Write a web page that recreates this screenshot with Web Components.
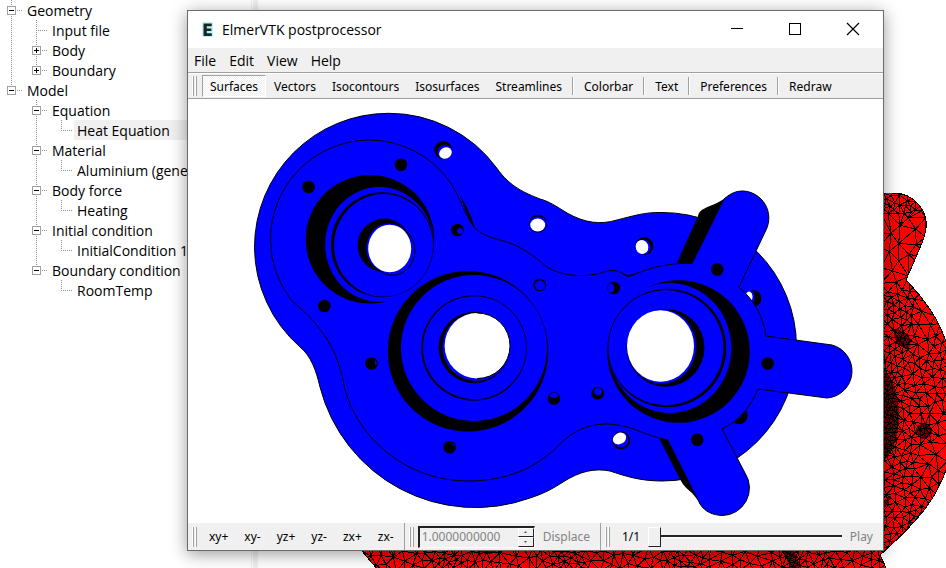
<!DOCTYPE html>
<html lang="en">
<head>
<meta charset="utf-8">
<title>ElmerVTK postprocessor</title>
<style>
  html, body { height: 100%; margin: 0; }
  body {
    background: #fff;
    color: #000;
    font: 14px/20px "Open Sans", "Noto Sans", sans-serif;
    overflow: hidden;
    --face: #f0f0f0;
    --line: #a0a0a0;
    --small: 12px/18px "Noto Sans", "Open Sans", sans-serif;
  }
</style>
</head>
<body>
<elmer-desktop>
  <model-tree slot="tree">
    <tree-item label="Geometry" state="open">
      <tree-item label="Input file"></tree-item>
      <tree-item label="Body" state="closed"></tree-item>
      <tree-item label="Boundary" state="closed" last></tree-item>
    </tree-item>
    <tree-item label="Model" state="open" last>
      <tree-item label="Equation" state="open"><tree-item label="Heat Equation" selected last></tree-item></tree-item>
      <tree-item label="Material" state="open"><tree-item label="Aluminium (generic)" last></tree-item></tree-item>
      <tree-item label="Body force" state="open"><tree-item label="Heating" last></tree-item></tree-item>
      <tree-item label="Initial condition" state="open"><tree-item label="InitialCondition 1" last></tree-item></tree-item>
      <tree-item label="Boundary condition" state="open" last><tree-item label="RoomTemp" last></tree-item></tree-item>
    </tree-item>
  </model-tree>
  <mesh-view slot="view"></mesh-view>
  <post-window slot="window" heading="ElmerVTK postprocessor">
    <menu-bar slot="menu" items="File,Edit,View,Help"></menu-bar>
    <tool-bar slot="tools">
      <tool-button pressed>Surfaces</tool-button>
      <tool-button>Vectors</tool-button>
      <tool-button>Isocontours</tool-button>
      <tool-button>Isosurfaces</tool-button>
      <tool-button>Streamlines</tool-button>
      <tool-separator></tool-separator>
      <tool-button>Colorbar</tool-button>
      <tool-separator></tool-separator>
      <tool-button>Text</tool-button>
      <tool-separator></tool-separator>
      <tool-button>Preferences</tool-button>
      <tool-separator></tool-separator>
      <tool-button>Redraw</tool-button>
    </tool-bar>
    <surface-view></surface-view>
    <tool-bar slot="views">
      <tool-button>xy+</tool-button>
      <tool-button>xy-</tool-button>
      <tool-button>yz+</tool-button>
      <tool-button>yz-</tool-button>
      <tool-button>zx+</tool-button>
      <tool-button>zx-</tool-button>
    </tool-bar>
    <tool-bar slot="displace" divided>
      <number-spin value="1.0000000000" label="Displacement scale"></number-spin>
      <tool-button disabled>Displace</tool-button>
    </tool-bar>
    <tool-bar slot="play" divided grow>
      <time-slider text="1/1"></time-slider>
      <tool-button disabled>Play</tool-button>
    </tool-bar>
  </post-window>
</elmer-desktop>

<script>
function define(name, markup, setup) {
  const template = document.createElement('template');
  template.innerHTML = markup;
  customElements.define(name, class extends HTMLElement {
    constructor() {
      super();
      this.attachShadow({ mode: 'open' }).append(template.content.cloneNode(true));
    }
    connectedCallback() {
      if (setup && !this.ready) { this.ready = true; setup(this, this.shadowRoot); }
    }
  });
}

define('elmer-desktop', `
<style>
  :host { display: grid; grid-template-columns: 251px 7px minmax(0, 1fr); position: relative; height: 100%; overflow: hidden; }
  .splitter { border-left: 1px solid #f0f0f0; background: linear-gradient(90deg, #fff 1px, #f0f0f0 1px); }
  ::slotted(post-window) { position: absolute; inset: 10px 62px 17px 187px; }
</style>
<slot name="tree"></slot><div class="splitter"></div><slot name="view"></slot><slot name="window"></slot>`);

define('model-tree', `
<style>:host { display: block; overflow: hidden; min-width: 0; }</style>
<div role="tree"><slot></slot></div>`);

define('tree-item', `
<style>
  :host { display: block; background: repeating-linear-gradient(#909090 0 1px, transparent 1px 2px) 11px 0 / 1px 100% no-repeat; }
  :host([last]) { background-size: 1px 11px; }
  .row { display: flex; align-items: center; height: 20px; padding-left: 7px;
    background: repeating-linear-gradient(90deg, #909090 0 1px, transparent 1px 2px) 11px 10px / 12px 1px no-repeat; }
  button, i { flex: none; width: 9px; height: 9px; }
  button { padding: 0; border: 1px solid #a0a0a0; display: grid; place-items: center;
    background: linear-gradient(#000, #000) center / 5px 1px no-repeat, #fff; }
  :host([state=closed]) button { background: linear-gradient(#000, #000) center / 5px 1px no-repeat, linear-gradient(#000, #000) center / 1px 5px no-repeat, #fff; }
  .label { flex: 1; box-sizing: border-box; height: 20px; margin-left: 8px; padding: 1px 0 0 3px; white-space: nowrap; line-height: 20px; }
  :host([selected]) .label { background: #f0f0f0; }
  .group { padding-left: 25px; }
  [hidden] { display: none; }
</style>
<div class="row"><button type="button"></button><i></i><span class="label"></span></div>
<div class="group" role="group"><slot></slot></div>`, (host, root) => {
  const label = host.getAttribute('label');
  const state = host.getAttribute('state');
  root.querySelector('.label').textContent = label;
  const button = root.querySelector('button');
  button.hidden = !state;
  root.querySelector('i').hidden = !!state;
  button.setAttribute('aria-label', (state === 'open' ? 'Collapse ' : 'Expand ') + label);
  host.setAttribute('role', 'treeitem');
});

define('post-window', `
<style>
  :host { display: flex; flex-direction: column; box-sizing: border-box; border: 1px solid #6a6a6a; background: #fff;
    box-shadow: 0 3px 16px rgba(0, 0, 0, .4); }
  header { flex: none; display: flex; align-items: center; height: 37px; padding: 0 1px 0 12px; }
  header svg { display: block; flex: none; }
  h1 { flex: 1; margin: 0 0 0 6px; font: inherit; }
  header button { align-self: start; width: 58px; height: 36px; padding: 0; border: 0; background: none; display: grid; place-items: center; }
  main { flex: 1; min-height: 0; display: flex; }
  footer { flex: none; display: flex; height: 27px; background: var(--face); }
</style>
<header>
  <svg width="16" height="18" viewBox="0 0 16 18"><path d="M3 2h9v13H3z" fill="#8ff2f2" stroke="#a5f5f5" stroke-width="2" stroke-linejoin="round" opacity=".7"/><path d="M3.500 2.500h8.300v2.700H6.800V7.400h4.600V10H6.800v2.300h5V15H3.500z" fill="#1c2628"/></svg>
  <h1></h1>
  <button type="button" aria-label="Minimize"><svg width="14" height="14" viewBox="0 0 14 14" shape-rendering="crispEdges"><path d="M1 6.500h12" stroke="#000"/></svg></button>
  <button type="button" aria-label="Maximize"><svg width="14" height="14" viewBox="0 0 14 14" shape-rendering="crispEdges"><path d="M1.500 1.500h11v11h-11z" fill="none" stroke="#000"/></svg></button>
  <button type="button" aria-label="Close"><svg width="14" height="14" viewBox="0 0 14 14"><path d="M1 1l12 12M13 1L1 13" stroke="#000" stroke-width="1.200"/></svg></button>
</header>
<slot name="menu"></slot>
<slot name="tools"></slot>
<main><slot></slot></main>
<footer><slot name="views"></slot><slot name="displace"></slot><slot name="play"></slot></footer>`, (host, root) => {
  root.querySelector('h1').textContent = host.getAttribute('heading');
});

define('menu-bar', `
<style>
  :host { display: block; flex: none; background: var(--face); border-bottom: 1px solid var(--line); }
  nav { display: flex; gap: 1px; height: 24px; align-items: center; }
  button { border: 0; background: none; font: inherit; color: inherit; padding: 1px 6px 0; height: 24px; }
</style>
<nav></nav>`, (host, root) => {
  for (const name of host.getAttribute('items').split(',')) {
    const button = document.createElement('button');
    button.type = 'button';
    button.textContent = name;
    root.querySelector('nav').append(button);
  }
});

define('tool-bar', `
<style>
  :host { display: flex; flex: none; align-items: center; box-sizing: border-box; background: var(--face); padding-left: 4px; font: var(--small); }
  :host([slot=tools]) { height: 26px; border-top: 1px solid #fff; border-bottom: 1px solid var(--line); }
  :host([divided]) { border-left: 1px solid var(--line); margin-left: 2px; }
  :host([grow]) { flex: 1; min-width: 0; padding-right: 2px; }
  .grip { flex: none; width: 6px; height: 20px; margin-right: 3px;
    background: linear-gradient(90deg, #fff 1px, var(--line) 1px 2px, var(--face) 2px 3px, #fff 3px 4px, var(--line) 4px 5px, transparent 5px); }
  :host([slot=tools]) .grip { margin-right: 4px; }
</style>
<span class="grip"></span><slot></slot>`);

define('tool-separator', `
<style>:host { display: block; flex: none; width: 1px; height: 18px; margin: 0 2px; background: var(--line); border-right: 1px solid #fff; box-sizing: content-box; }</style>`);

define('tool-button', `
<style>
  :host { display: block; flex: none; }
  button { display: block; box-sizing: border-box; font: inherit; color: inherit; height: 22px; padding: 1px 7px 0; border: 1px solid transparent; background: none; }
  :host([pressed]) button { border-color: #a0a0a0 #fff #fff #a0a0a0; background: repeating-conic-gradient(#fff 0 25%, #f0f0f0 0 50%) 0 0 / 2px 2px; padding-top: 2px; }
  button:disabled { color: #838383; }
</style>
<button type="button"><slot></slot></button>`, (host, root) => {
  root.querySelector('button').disabled = host.hasAttribute('disabled');
});

define('number-spin', `
<style>
  :host { display: flex; flex: none; box-sizing: border-box; width: 117px; height: 22px; border: 1px solid; border-width: 2px 1px 1px 2px; border-color: #222 #fff #fff #222; }
  input { flex: 1; min-width: 0; box-sizing: border-box; padding: 0 0 0 2px; border: 0; background: none; font: inherit; color: #838383; }
  .steps { display: grid; width: 16px; grid-template-rows: 1fr 1fr; }
  .steps button { padding: 0; min-height: 0; display: grid; place-items: center; background: var(--face); border: 1px solid; border-color: #fff #222 #222 #fff; }
  svg { display: block; }
</style>
<input type="text" disabled>
<span class="steps">
  <button type="button" disabled aria-label="Increase"><svg width="3" height="2" viewBox="0 0 3 2"><path d="M0 2L1.500 0 3 2z" fill="#555"/></svg></button>
  <button type="button" disabled aria-label="Decrease"><svg width="3" height="2" viewBox="0 0 3 2"><path d="M0 0L1.500 2 3 0z" fill="#555"/></svg></button>
</span>`, (host, root) => {
  const input = root.querySelector('input');
  input.value = host.getAttribute('value');
  input.setAttribute('aria-label', host.getAttribute('label'));
});

define('time-slider', `
<style>
  :host { display: flex; flex: 1; min-width: 0; align-items: center; }
  label { padding: 0 8px; }
  input { -webkit-appearance: none; appearance: none; flex: 1; min-width: 0; height: 20px; margin: 0; background: none; }
  input::-webkit-slider-runnable-track { height: 20px; background: linear-gradient(#222 2px, #fff 2px) 0 8px / 100% 3px no-repeat; }
  input::-webkit-slider-thumb { -webkit-appearance: none; width: 13px; height: 20px; background: var(--face); border: 1px solid; border-color: #fff #222 #222 #fff; box-sizing: border-box; }
</style>
<label for="step"></label><input id="step" type="range" min="0" max="10" value="0">`, (host, root) => {
  root.querySelector('label').textContent = host.getAttribute('text');
});

define('surface-view', `
<style>
  :host { display: block; flex: 1; min-width: 0; min-height: 0; background: #fff; }
  svg { display: block; width: 100%; height: 100%; }
  .b { fill: #00f; } .k { fill: #000; } .w { fill: #fff; }
  .l { fill: none; stroke: #000; } .o { fill: #00f; stroke: #000; }
</style>
<svg viewBox="188 99 695 424" role="img" aria-label="Gear housing surface">
  <path class="o" d="M320 387A160.500 160.500 0 0 0 530 498C545 493 552 489 563 482C580 471 595 468 610 471C625 476 640 481 662 481A134.300 134.300 0 0 0 796.500 347A134.300 134.300 0 0 0 662 212.500C645 212 633 216 617 220C600 225 585 223 567 213C556 206 548 201 540 199C525 193 510 187 496.700 168A134 134 0 0 0 388.500 113.300A134 134 0 0 0 254.500 247.300A134 134 0 0 0 300 347C311 356 316 370 320 387Z"/>
  <!-- through holes of the lower flange -->
  <circle class="k" cx="443.300" cy="150" r="9"/><ellipse class="b" cx="445" cy="152" rx="7.500" ry="7"/><ellipse class="w" cx="445.500" cy="153" rx="6.500" ry="5.500" transform="rotate(-25 445.500 153)"/>
  <circle class="k" cx="538" cy="223.700" r="9"/><ellipse class="b" cx="538" cy="224" rx="8.500" ry="7.500"/><ellipse class="w" cx="537.700" cy="225" rx="7.500" ry="6.500"/>
  <circle class="k" cx="644.300" cy="246" r="9"/><ellipse class="b" cx="643" cy="247" rx="7.500" ry="7.500"/><ellipse class="w" cx="642" cy="247" rx="6.300" ry="7" transform="rotate(-20 642 247)"/>
  <circle class="k" cx="753" cy="298.500" r="8.500"/><ellipse class="b" cx="750.500" cy="297" rx="4" ry="7"/><ellipse class="w" cx="749" cy="297" rx="3.500" ry="5.500"/>
  <circle class="k" cx="739" cy="415.500" r="8.700"/><circle class="b" cx="736" cy="413" r="6"/>
  <circle class="k" cx="621.300" cy="440.500" r="9"/><circle class="b" cx="621" cy="440" r="7.500"/><ellipse class="w" cx="619.500" cy="438.500" rx="7" ry="5.500" transform="rotate(-30 619.500 438.500)"/>
  <!-- shaded walls of the arms -->
  <path class="k" d="M677 262.500L698 216C699 209 708 207 717 203L724 199 692 264ZM659 438L667 438 702 505 692 493C687 489 683 485 681 481Z"/>
  <!-- raised body with three arms -->
  <path class="o" d="M659 438C635 431 630 425 607 424C580 424 566 438 555 449C530 472 500 481 468 481C405 481 358 437 345 390C340 360 330 332 292 301A99.500 99.500 0 0 1 270.500 240A99.500 99.500 0 0 1 369 140A99.500 99.500 0 0 1 450 182C460 197 463 210 468 217C475 233 485 236 507 242C522 247 535 257 547 267C565 278 590 277 604 272C616 268 622 273 628 276.500C634 276 655 262 692 263.500L724 199C731 193 736 191 743 191A27 27 0 0 1 766 230L739 287C753 299 763 315 766 336L832 345A27 27 0 0 1 827 398L758 389C752 404 741 420 722 429L745 473A27.500 27.500 0 0 1 722 515.500C713 515 705 512 700 504L667 439"/>
  <path class="k" d="M460 196C467 206 472 218 475 229C468 220 465 208 460 196ZM622 274L628 277 638 273 628 275Z"/>
  <!-- upper left bore -->
  <circle class="k" cx="370" cy="239.300" r="64.300"/><ellipse class="b" cx="379.500" cy="244.500" rx="54.300" ry="57.500"/>
  <ellipse class="k" cx="382.300" cy="244.800" rx="51.500" ry="52.500"/><ellipse class="b" cx="383.500" cy="245.300" rx="49.500" ry="51.300"/>
  <circle class="k" cx="384.300" cy="245.300" r="26.700"/><ellipse class="b" cx="389" cy="248" rx="22.500" ry="24.500"/><ellipse class="w" cx="389.700" cy="248.500" rx="21.500" ry="23.700"/><path class="l" d="M405 230A21.500 23.700 0 0 1 380 271"/>
  <!-- middle bore -->
  <circle class="k" cx="468" cy="351.300" r="80.300"/><circle class="b" cx="474" cy="348" r="73"/>
  <circle class="k" cx="474" cy="348" r="52.800"/><circle class="b" cx="474.500" cy="347.700" r="51.500"/>
  <circle class="k" cx="474.300" cy="347.500" r="35.700"/><circle class="b" cx="476.300" cy="347" r="33.800"/><circle class="w" cx="477.300" cy="345.700" r="32.700"/><path class="l" d="M477 313A32.700 32.700 0 0 1 510 346A32.700 32.700 0 0 1 477 378.500"/>
  <!-- right bore -->
  <circle class="k" cx="678.500" cy="351.500" r="71.300"/><ellipse class="b" cx="669.800" cy="348" rx="61.500" ry="65"/>
  <circle class="k" cx="667" cy="348" r="59.300"/><circle class="b" cx="665.900" cy="347.700" r="57.500"/>
  <circle class="k" cx="665.500" cy="347.700" r="39"/><ellipse class="b" cx="661.500" cy="346.500" rx="34.500" ry="37"/><ellipse class="w" cx="660.500" cy="346" rx="33.500" ry="35.800"/>
  <!-- screw holes -->
  <g class="k"><circle cx="401" cy="164.700" r="6.300"/><circle cx="308.500" cy="187" r="6.300"/><circle cx="324.300" cy="306" r="6.300"/><circle cx="457.500" cy="230" r="6.300"/><circle cx="539.700" cy="285" r="6.300"/><circle cx="613.700" cy="288" r="6.300"/><circle cx="371.500" cy="363.500" r="6.300"/><circle cx="449.700" cy="447.300" r="6.300"/><circle cx="554" cy="398.500" r="6.300"/><circle cx="597.700" cy="393.300" r="6.300"/><circle cx="717.300" cy="269.500" r="6.300"/><circle cx="767.700" cy="363.500" r="6.300"/><circle cx="697.300" cy="439.700" r="6.300"/></g>
  <g class="b"><circle cx="460" cy="231" r="3"/><circle cx="540" cy="285.500" r="5"/><ellipse cx="611" cy="288" rx="3" ry="4.500"/><ellipse cx="554" cy="395.500" rx="4" ry="2.500"/><ellipse cx="598" cy="391.500" rx="4" ry="3.500"/><path d="M375 360l2 3-1 3-1-3zM450 442l5 3-1 1z"/></g>
</svg>`);

/* Incremental Delaunay triangulation (Bowyer-Watson); returns index triples. */
function triangulate(points) {
  const n = points.length, all = points.concat([[-9000, -9000], [10000, -9000], [500, 14000]]);
  const circle = (a, b, c) => {
    const [ax, ay] = all[a], bx = all[b][0] - ax, by = all[b][1] - ay, cx = all[c][0] - ax, cy = all[c][1] - ay;
    const d = 2 * (bx * cy - by * cx) || 1e-9, p = bx * bx + by * by, q = cx * cx + cy * cy;
    const x = (cy * p - by * q) / d, y = (bx * q - cx * p) / d;
    return { v: [a, b, c], x: x + ax, y: y + ay, r: x * x + y * y };
  };
  let open = [circle(n, n + 1, n + 2)];
  const done = [];
  points.forEach(([px, py], i) => {
    const edges = new Map(), keep = [];
    for (const t of open) {
      const dx = px - t.x, dy = py - t.y;
      if (dx > 0 && dx * dx > t.r) { done.push(t.v); continue; }
      if (dx * dx + dy * dy > t.r) { keep.push(t); continue; }
      for (const [a, b] of [[t.v[0], t.v[1]], [t.v[1], t.v[2]], [t.v[2], t.v[0]]]) {
        const key = Math.min(a, b) + ',' + Math.max(a, b);
        edges.has(key) ? edges.set(key, null) : edges.set(key, [a, b]);
      }
    }
    open = keep;
    for (const e of edges.values()) if (e) open.push(circle(e[0], e[1], i));
  });
  return done.concat(open.map(t => t.v)).filter(v => Math.max(...v) < n);
}

define('mesh-view', `
<style>
  :host { display: block; min-width: 0; overflow: hidden; background: #fff; }
  svg { display: block; width: 100%; height: 100%; }
</style>
<svg viewBox="258 0 688 568" preserveAspectRatio="xMinYMin slice" role="img" aria-label="Finite element mesh">
  <defs><clipPath id="part"><path d="M860 193H893C916 193 928 213 926 228C925 237 922 243 919 250L906 280C930 305 941 326 946 342C962 380 961 430 946 470C937 496 922 518 880 555L887 570H378L340 525H860Z"/></clipPath></defs>
  <g clip-path="url(#part)" shape-rendering="crispEdges">
    <path d="M330 180h620v390H330z" fill="#f00"/>
    <g fill="#700000"><ellipse cx="868" cy="415" rx="31" ry="54"/><circle cx="924" cy="431" r="8"/><ellipse cx="902" cy="339" rx="6" ry="11" transform="rotate(-35 902 339)"/><path d="M782 549h11l9 20h-11zM884 500l7-4-3 9-4 3z"/><ellipse cx="488" cy="550" rx="9" ry="4"/></g>
    <path id="mesh" fill="none" stroke="#000"/>
  </g>
  <path d="M893 193C916 193 928 213 926 228C925 237 922 243 919 250L906 280C930 305 941 326 946 342M946 470C937 496 922 518 880 555L887 570M378 570L340 525" fill="none" stroke="#000" shape-rendering="crispEdges"/>
</svg>`, (host, root) => {
  let seed = 7;
  const random = () => (seed = (seed * 16807) % 2147483647) / 2147483647;
  const dark = (x, y) => ((x - 868) / 31) ** 2 + ((y - 415) / 54) ** 2 < 1 || Math.hypot(x - 924, y - 431) < 8 ||
    Math.hypot(x - 902, y - 339) < 8 || (y > 545 && Math.abs(x - 782 - (y - 549) * .45 - 5) < 6);
  const size = (x, y) => {
    if (dark(x, y)) return 3.5;
    if (y > 545 && x < 870) return 7 + 2 * Math.sin(x / 19);
    if (y < 215) return 5;
    if (y < 290) return 11;
    return x > 915 ? 8 + 2 * Math.sin(y / 22) : 6;
  };
  const points = [];
  const scatter = (x0, y0, w, h, tries) => {
    for (let i = 0; i < tries; i++) {
      const x = x0 + random() * w, y = y0 + random() * h, s = size(x, y);
      if (!points.some(p => Math.abs(p[0] - x) < s && Math.hypot(p[0] - x, p[1] - y) < s)) points.push([x, y]);
    }
  };
  scatter(876, 185, 78, 360, 9000);
  scatter(350, 540, 604, 36, 7000);
  points.sort((a, b) => a[0] - b[0]);
  const at = i => points[i].map(v => v.toFixed(1)).join(' ');
  root.getElementById('mesh').setAttribute('d', triangulate(points).map(([a, b, c]) => `M${at(a)}L${at(b)} ${at(c)}Z`).join(''));
});
</script>
</body>
</html>
